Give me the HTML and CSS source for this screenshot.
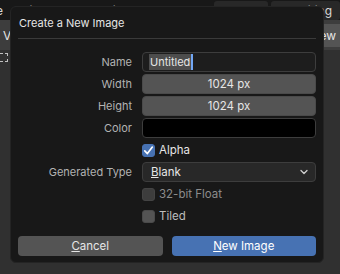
FILE: index.html
```html
<!DOCTYPE html>
<html lang="en">
<head>
  <meta charset="UTF-8" />
  <title>Create a New Image</title>
  <link rel="stylesheet" href="styles.css">
</head>
<body>
  <div class="app">
    <div class="menubar">
      <span class="menu-first">File</span>
      <span>Edit</span>
      <span>Render</span>
      <span>Window</span>
      <span>Help</span>
      <div class="tabs">
        <span class="tab">Layout</span>
        <span class="tab">UV Editing</span>
      </div>
    </div>
    <div class="header">
      <span>V</span>
      <span class="spacer"></span>
      <span class="new-btn">New</span>
    </div>
    <div class="workspace">
      <div class="side-icon"></div>
    </div>
  </div>

  <div class="dialog">
    <div class="dialog-title">Create a New Image</div>
    <div class="separator"></div>

    <div class="form">
      <label class="label">Name</label>
      <div class="field text-field"><span class="selected">Untitled</span><span class="caret"></span></div>

      <label class="label">Width</label>
      <div class="field number">1024 px</div>

      <label class="label">Height</label>
      <div class="field number">1024 px</div>

      <label class="label">Color</label>
      <div class="field color"></div>

      <span></span>
      <div class="check-row">
        <span class="checkbox checked">
          <svg width="11" height="11" viewBox="0 0 10 10"><path d="M1.6 5.3 L4 7.8 L8.5 1.9" fill="none" stroke="#fff" stroke-width="1.5" stroke-linecap="round" stroke-linejoin="round"/></svg>
        </span>
        <span>Alpha</span>
      </div>

      <label class="label">Generated Type</label>
      <div class="field select">
        <span><u>B</u>lank</span>
        <svg width="10" height="10" viewBox="0 0 10 10"><path d="M2 3.5 L5 6.5 L8 3.5" fill="none" stroke="#d0d0d0" stroke-width="1.3" stroke-linecap="round" stroke-linejoin="round"/></svg>
      </div>

      <span></span>
      <div class="check-row disabled">
        <span class="checkbox"></span>
        <span>32-bit Float</span>
      </div>

      <span></span>
      <div class="check-row">
        <span class="checkbox"></span>
        <span class="muted">Tiled</span>
      </div>
    </div>

    <div class="buttons">
      <button class="btn"><u>C</u>ancel</button>
      <button class="btn primary"><u>N</u>ew Image</button>
    </div>
  </div>
</body>
</html>
```

FILE: styles.css
```css
* {
  box-sizing: border-box;
}

body {
  margin: 0;
  width: 340px;
  height: 274px;
  overflow: hidden;
  font-family: Inter, "DejaVu Sans", sans-serif;
  font-size: 11px;
  color: #e6e6e6;
  background-color: #303030;
  position: relative;
}

.app {
  display: flex;
  flex-direction: column;
  height: 100%;
}

.menubar {
  height: 20px;
  background-color: #181818;
  display: flex;
  align-items: center;
  gap: 12px;
  overflow: hidden;
  color: #d8d8d8;
  font-size: 12px;
  white-space: nowrap;
}

.menu-first {
  margin-left: -17px;
}

.tabs {
  margin-left: auto;
  display: flex;
  gap: 3px;
  flex-shrink: 0;
}

.tab {
  background-color: #282828;
  padding: 2px 8px 2px 0;
  border-radius: 3px;
  width: 54px;
  overflow: hidden;
  text-align: right;
  direction: rtl;
}

.tab + .tab {
  width: 69px;
}

.spacer {
  flex: 1;
}

.header {
  height: 30px;
  background-color: #3d3d3d;
  display: flex;
  align-items: center;
  overflow: hidden;
  padding: 0 0 0 3px;
  font-size: 12px;
}

.new-btn {
  background-color: #545454;
  padding: 4px 4px 4px 8px;
  border-radius: 3px 0 0 3px;
}

.workspace {
  flex: 1;
  background-color: #303030;
  padding: 3px 0;
}

.side-icon {
  width: 8px;
  height: 9px;
  border: 1px dashed #c0c0c0;
  border-left: none;
}

.dialog {
  position: absolute;
  left: 10px;
  top: 6px;
  width: 314px;
  height: 257px;
  background-color: #181818;
  border: 1px solid #242424;
  border-radius: 6px;
  padding: 0 7px;
  display: flex;
  flex-direction: column;
}

.dialog-title {
  height: 31px;
  padding: 9px 0 0 1px;
  font-size: 11px;
  color: #e6e6e6;
}

.separator {
  height: 1px;
  background-color: #3a3a3a;
  margin: 0 0 13px 0;
}

.form {
  display: grid;
  grid-template-columns: 114px 1fr;
  grid-auto-rows: 20px;
  column-gap: 10px;
  row-gap: 2px;
}

.label {
  text-align: right;
  line-height: 20px;
  color: #b3b3b3;
}

.field {
  border-radius: 4px;
  line-height: 20px;
  height: 20px;
}

.text-field {
  background-color: #1d1d1d;
  border: 1px solid #3d3d3d;
  padding: 0 0 0 6px;
  display: flex;
  align-items: center;
}

.selected {
  background-color: #4d4d4d;
  line-height: 16px;
  padding: 0 1px;
}

.caret {
  width: 2px;
  height: 16px;
  background-color: #71a6f4;
}

.number {
  background-color: #545454;
  text-align: center;
  border: 1px solid #4a4a4a;
  line-height: 18px;
  font-size: 11.5px;
}

.color {
  background-color: #000;
  border: 1px solid #3d3d3d;
}

.select {
  background-color: #282828;
  border: 1px solid #3d3d3d;
  display: flex;
  align-items: center;
  justify-content: space-between;
  padding: 0 6px 0 8px;
  font-size: 11.5px;
}

.check-row {
  display: flex;
  align-items: center;
  gap: 4px;
  font-size: 11.5px;
}

.checkbox {
  width: 13px;
  height: 13px;
  border-radius: 3px;
  background-color: #545454;
  border: 1px solid #4a4a4a;
  display: flex;
  align-items: center;
  justify-content: center;
}

.checkbox.checked {
  background-color: #4772b3;
  border-color: #4772b3;
}

.disabled {
  color: #8c8c8c;
}

.disabled .checkbox {
  background-color: #3d3d3d;
  border-color: #444;
}

.muted {
  color: #bdbdbd;
}

.buttons {
  display: grid;
  grid-template-columns: 1fr 1fr;
  gap: 9px;
  margin-top: 10px;
}

.btn {
  height: 20px;
  border: none;
  border-radius: 4px;
  background-color: #545454;
  color: #e6e6e6;
  font-family: Inter, "DejaVu Sans", sans-serif;
  font-size: 11.5px;
  padding: 0;
}

.btn.primary {
  background-color: #4772b3;
  color: #fff;
}
```
